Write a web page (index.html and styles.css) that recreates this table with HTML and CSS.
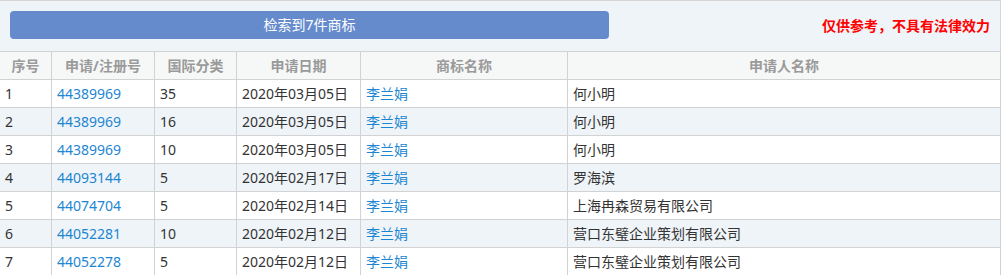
FILE: index.html
```html
<!DOCTYPE html>
<html lang="zh-CN">
<head>
<meta charset="utf-8">
<title>检索结果</title>
<link rel="stylesheet" href="styles.css">
</head>
<body>
<div class="wrap">
  <div class="topbar">
    <div class="btn">检索到7件商标</div>
    <div class="notice">仅供参考，不具有法律效力</div>
  </div>
  <table class="grid">
    <colgroup>
      <col class="c1"><col class="c2"><col class="c3"><col class="c4"><col class="c5"><col class="c6">
    </colgroup>
    <thead>
      <tr><th>序号</th><th>申请/注册号</th><th>国际分类</th><th>申请日期</th><th>商标名称</th><th>申请人名称</th></tr>
    </thead>
    <tbody>
      <tr><td>1</td><td><a>44389969</a></td><td>35</td><td>2020年03月05日</td><td><a>李兰娟</a></td><td>何小明</td></tr>
      <tr><td>2</td><td><a>44389969</a></td><td>16</td><td>2020年03月05日</td><td><a>李兰娟</a></td><td>何小明</td></tr>
      <tr><td>3</td><td><a>44389969</a></td><td>10</td><td>2020年03月05日</td><td><a>李兰娟</a></td><td>何小明</td></tr>
      <tr><td>4</td><td><a>44093144</a></td><td>5</td><td>2020年02月17日</td><td><a>李兰娟</a></td><td>罗海滨</td></tr>
      <tr><td>5</td><td><a>44074704</a></td><td>5</td><td>2020年02月14日</td><td><a>李兰娟</a></td><td>上海冉森贸易有限公司</td></tr>
      <tr><td>6</td><td><a>44052281</a></td><td>10</td><td>2020年02月12日</td><td><a>李兰娟</a></td><td>营口东璧企业策划有限公司</td></tr>
      <tr><td>7</td><td><a>44052278</a></td><td>5</td><td>2020年02月12日</td><td><a>李兰娟</a></td><td>营口东璧企业策划有限公司</td></tr>
    </tbody>
  </table>
</div>
</body>
</html>
```
FILE: styles.css
```css
html, body {
  margin: 0;
  padding: 0;
  background: #fff;
}
body {
  font-family: "Noto Sans", "Noto Sans CJK SC", sans-serif;
  font-size: 14px;
  color: #333;
}
.wrap {
  width: 1000px;
  border-top: 1px solid #d6d6d6;
  border-right: 1px solid #d6d6d6;
}
.topbar {
  height: 50px;
  background: #eff4f8;
  display: flex;
  align-items: flex-start;
  justify-content: space-between;
  box-sizing: border-box;
  padding: 10px 10px 0 10px;
}
.btn {
  width: 599px;
  height: 28px;
  background: #658bcd;
  border-radius: 4px;
  color: #fff;
  font-size: 14px;
  line-height: 28px;
  text-align: center;
}
.notice {
  color: #ff0000;
  font-weight: bold;
  font-size: 14px;
  line-height: 28px;
  margin-top: 1px;
}
.grid {
  width: 1001px;
  table-layout: fixed;
  border-collapse: separate;
  border-spacing: 0;
  margin-right: -1px;
}
.c1 { width: 52px; }
.c2 { width: 103px; }
.c3 { width: 82px; }
.c4 { width: 124px; }
.c5 { width: 207px; }
.c6 { width: 433px; }
.grid th, .grid td {
  height: 27px;
  padding: 0 0 0 5px;
  border-right: 1px solid #d2d2d2;
  border-bottom: 1px solid #d2d2d2;
  box-sizing: border-box;
  white-space: nowrap;
  overflow: hidden;
  vertical-align: middle;
  line-height: 27px;
}
.grid th {
  border-top: 1px solid #d2d2d2;
  background: #f6f7f7;
  color: #9a9a9a;
  font-weight: bold;
  text-align: center;
  padding: 0;
  height: 29px;
}
.grid td {
  height: 28px;
}
.grid tbody tr:nth-child(even) td {
  background: #eff4f8;
}
.grid a {
  color: #1c86d3;
  text-decoration: none;
}
```
